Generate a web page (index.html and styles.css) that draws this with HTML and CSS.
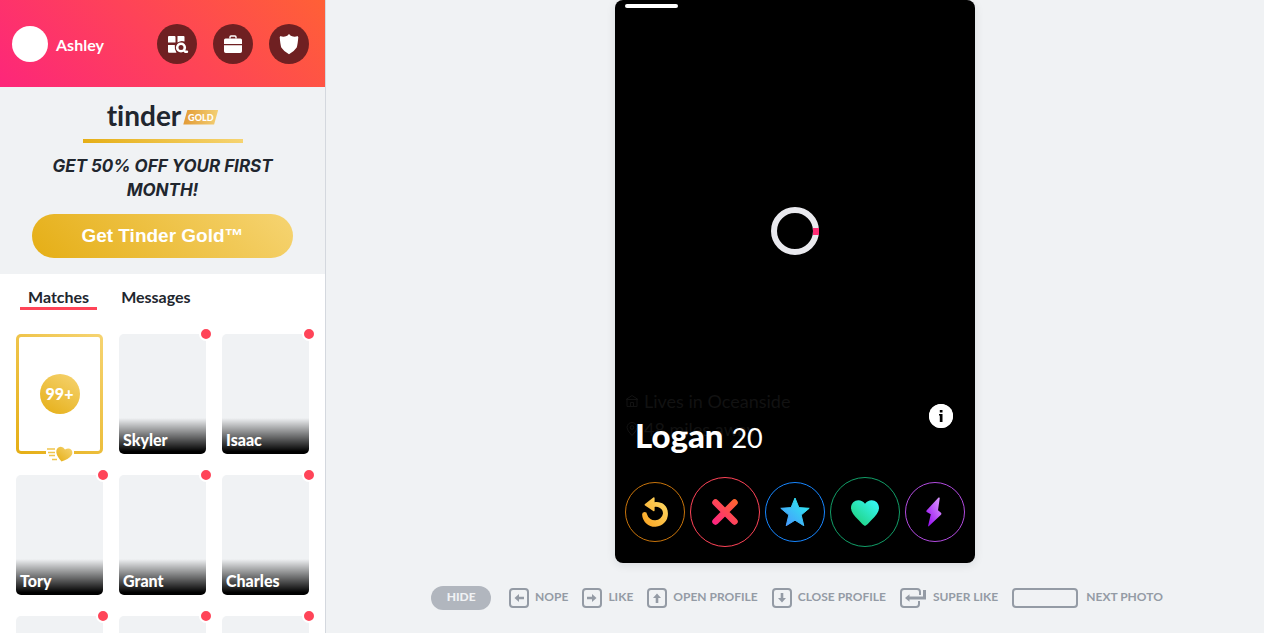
FILE: index.html
```html
<!DOCTYPE html>
<html lang="en">
<head>
<meta charset="utf-8">
<title>Tinder</title>
<link rel="stylesheet" href="styles.css">
</head>
<body>
<div class="app">
  <aside class="sidebar">
    <header class="topbar">
      <a class="profile" href="#"><span class="avatar"></span><span class="username">Ashley</span></a>
      <nav class="tools">
        <button class="tool" type="button" aria-label="Explore">
          <svg viewBox="0 0 40 40"><path fill="#fff" d="M12 12h5.500q1 0 1 1v5.500h-7.500v-5.500q0-1 1-1zM20.500 12h6q1 0 1 1v4.500q-3.500-1.500-7 1zM11 21h6.800q-.6 4 1.700 7.800h-7.500q-1 0-1-1z"/><circle cx="24" cy="23.500" r="3.800" fill="none" stroke="#fff" stroke-width="2.600"/><path d="M27 26.500l1.300 1.300h1.700" fill="none" stroke="#fff" stroke-width="2.400" stroke-linecap="round"/></svg>
        </button>
        <button class="tool" type="button" aria-label="Work mode">
          <svg viewBox="0 0 40 40"><path fill="#fff" d="M12.500 14.500h15q1.500 0 1.500 1.500v4h-18v-4q0-1.500 1.500-1.500zM11 21.200h18v6q0 1.800-1.800 1.800h-14.400q-1.800 0-1.800-1.800z"/><path d="M17 14.500v-1.500q0-1 1-1h4q1 0 1 1v1.500" fill="none" stroke="#fff" stroke-width="1.400"/></svg>
        </button>
        <button class="tool" type="button" aria-label="Safety">
          <svg viewBox="0 0 40 40"><path fill="#fff" d="M20 10q1.500 2 4 2.500 2.500.5 4.700-.5 0 .8.600 1-.5 7-1.600 10.500-2.500 4-7.700 6.700-5.200-2.700-7.700-6.700-1.100-3.500-1.600-10.500.6-.2.600-1 2.200 1 4.700.5 2.500-.5 4-2.500z"/></svg>
        </button>
      </nav>
    </header>

    <section class="promo">
      <div class="logo"><span class="logo-word">tinder</span><span class="logo-gold">GOLD</span></div>
      <div class="rule"></div>
      <p class="offer">GET 50% OFF YOUR FIRST MONTH!</p>
      <button class="gold-button" type="button">Get Tinder Gold™</button>
    </section>

    <nav class="tabs">
      <a class="tab tab-active" href="#">Matches</a>
      <a class="tab" href="#">Messages</a>
    </nav>

    <div class="matches">
      <a class="likes" href="#">
        <span class="count">99+</span>
        <svg class="flying-heart" viewBox="0 0 28 16">
          <defs><linearGradient id="gold" x1="0" y1="1" x2="1" y2="0"><stop stop-color="#e5ae15"/><stop offset="1" stop-color="#f6d472"/></linearGradient></defs>
          <path fill="#fff" d="M0 5h28v6H0z"/>
          <path d="M1 3h8M2 6.500h7M3 9.500h6M6 13.500h5" stroke="#efc54e" stroke-width="1.400"/>
          <path fill="url(#gold)" d="M15.500 15.500Q11 10.500 10.300 6.500Q10 2 13.500 1Q17 .2 19 3.500Q23 1.500 25.500 4Q27.500 7 25 10Q22.500 13 15.500 15.500z"/>
        </svg>
      </a>
      <a class="match" href="#"><span class="match-name">Skyler</span></a>
      <a class="match" href="#"><span class="match-name">Isaac</span></a>
      <a class="match" href="#"><span class="match-name">Tory</span></a>
      <a class="match" href="#"><span class="match-name">Grant</span></a>
      <a class="match" href="#"><span class="match-name">Charles</span></a>
      <a class="match" href="#" aria-label="Match"></a>
      <a class="match" href="#" aria-label="Match"></a>
      <a class="match" href="#" aria-label="Match"></a>
    </div>
  </aside>

  <main class="stage">
    <article class="card">
      <div class="photo-bar"></div>
      <div class="photo">
        <svg class="spinner" viewBox="0 0 48 48"><circle cx="24" cy="24" r="21" fill="none" stroke="#e9e9ee" stroke-width="6"/><path fill="#ff2d75" d="M42 21h6v7h-6z"/></svg>
      </div>
      <div class="info">
        <div class="details">
          <p class="detail"><svg class="detail-icon" viewBox="0 0 14 14" fill="none" stroke="currentColor"><path d="M1 5.500L7 1.500l6 4zM2 5.500v7h10v-7M5.500 12.500V8.500h3v4"/></svg>Lives in Oceanside</p>
          <p class="detail"><svg class="detail-icon" viewBox="0 0 14 14" fill="none" stroke="currentColor"><path d="M7 13.500Q2 8.500 2 5.500a5 5 0 0 1 10 0Q12 8.500 7 13.500z"/><circle cx="7" cy="5.500" r="1.800"/></svg>48 miles away</p>
        </div>
        <h1 class="person">Logan <span class="age">20</span></h1>
        <button class="info-button" type="button" aria-label="Open profile">
          <svg viewBox="0 0 24 24"><circle cx="12" cy="12" r="12" fill="#fff"/><path d="M10.800 6h2.700v2.400h-2.700zM10 10h3.500v8h-2.700v-6.500H10z"/></svg>
        </button>
      </div>
      <div class="actions">
        <button class="action action-rewind" type="button" aria-label="Rewind">
          <svg viewBox="0 0 30 30"><defs><linearGradient id="rewind" x1="0" y1="1" x2="1" y2="0"><stop stop-color="#f9a01e"/><stop offset="1" stop-color="#ffdf6b"/></linearGradient></defs><path fill="url(#rewind)" d="M13.300.4Q14.600-.1 14.600 1.200V5.200C23 4 27.900 10 27.900 16.300A12.900 12.900 0 0 1 2.100 17.500Q2.100 15 4.500 15Q7 15 7 17.300A8.200 8.200 0 0 0 23 16.500C23 12.500 19.500 9.200 14.600 9.900V13.200Q14.600 14.600 13.200 13.900L5 8.400Q4 7.700 5 6.900z"/></svg>
        </button>
        <button class="action action-big action-nope" type="button" aria-label="Nope">
          <svg viewBox="0 0 30 30"><defs><linearGradient id="nope" gradientUnits="userSpaceOnUse" x1="2" y1="28" x2="28" y2="2"><stop stop-color="#ff1f88"/><stop offset="1" stop-color="#ff6a28"/></linearGradient></defs><path d="M5.500 5.500l19 19M24.500 5.500l-19 19" stroke="url(#nope)" stroke-width="6.500" stroke-linecap="round"/></svg>
        </button>
        <button class="action action-super" type="button" aria-label="Super Like">
          <svg viewBox="0 0 30 30"><defs><linearGradient id="super" x1="0" y1="1" x2="1" y2="0"><stop stop-color="#4a90ff"/><stop offset="1" stop-color="#2cf5ee"/></linearGradient></defs><path fill="url(#super)" stroke="url(#super)" stroke-linejoin="round" d="M15 1l3.900 9.600 10.300.7-8 6.700 2.600 10.700-8.800-5.500-8.800 5.500L8.800 18l-8-6.700 10.300-.7z"/></svg>
        </button>
        <button class="action action-big action-like" type="button" aria-label="Like">
          <svg viewBox="0 0 30 30"><defs><linearGradient id="like" x1="0" y1="1" x2="1" y2="0"><stop offset=".1" stop-color="#1fd07b"/><stop offset="1" stop-color="#37fbff"/></linearGradient></defs><path fill="url(#like)" d="M15 29Q13 28 9 23.500Q1 16 1 11C1 6 4.500 3.200 8.300 3.200Q12.500 3.200 15 6.700Q17.500 3.200 21.700 3.200C25.500 3.200 29 6 29 11Q29 16 21 23.500Q17 28 15 29z"/></svg>
        </button>
        <button class="action action-boost" type="button" aria-label="Boost">
          <svg viewBox="0 0 30 30"><defs><linearGradient id="boost" x1="0" y1="1" x2="1" y2="0"><stop stop-color="#9100f0"/><stop offset="1" stop-color="#e0a4ff"/></linearGradient></defs><path fill="url(#boost)" d="M18.500.6Q20 0 19.700 1.500L18 13.300 21 15.800Q21.800 16.700 21 17.800L9 29Q7.800 30 8.200 28.400L10.800 17.200 6.700 15Q6 14.200 6.700 13.300z"/></svg>
        </button>
      </div>
    </article>

    <footer class="hints">
      <button class="hide" type="button">HIDE</button>
      <ul class="hint-list">
        <li class="hint"><svg class="key" viewBox="0 0 20 20"><rect x="1" y="1" width="18" height="18" rx="3"/><path class="arrow" d="M5.500 10l4.500-4v2.700h5v2.600h-5v2.700z"/></svg>NOPE</li>
        <li class="hint"><svg class="key" viewBox="0 0 20 20"><rect x="1" y="1" width="18" height="18" rx="3"/><path class="arrow" d="M14.500 10l-4.500 4v-2.700h-5v-2.600h5v-2.700z"/></svg>LIKE</li>
        <li class="hint"><svg class="key" viewBox="0 0 20 20"><rect x="1" y="1" width="18" height="18" rx="3"/><path class="arrow" d="M10 5.500l4 4.500h-2.700v5h-2.600v-5h-2.700z"/></svg>OPEN PROFILE</li>
        <li class="hint"><svg class="key" viewBox="0 0 20 20"><rect x="1" y="1" width="18" height="18" rx="3"/><path class="arrow" d="M10 14.500l-4-4.500h2.700v-5h2.600v5h2.700z"/></svg>CLOSE PROFILE</li>
        <li class="hint"><svg class="key key-enter" viewBox="0 0 27 20"><path d="M20 7V4q0-3-3-3H4Q1 1 1 4v12q0 3 3 3h12q3 0 3-3v-3"/><path class="thick" d="M9 10h15.500V2"/><path class="arrow" d="M5 10l4.500-3.800v7.600z"/></svg>SUPER LIKE</li>
        <li class="hint hint-space"><svg class="key key-space" viewBox="0 0 66 20"><rect x="1" y="1" width="64" height="18" rx="3"/></svg>NEXT PHOTO</li>
      </ul>
    </footer>
  </main>
</div>
</body>
</html>
```
FILE: styles.css
```css
*,
*::after {
  box-sizing: border-box;
}

body {
  margin: 0;
  font-family: Lato, "Open Sans", sans-serif;
  color: #21262e;
}

button {
  padding: 0;
  border: 0;
  font-family: inherit;
  cursor: pointer;
}

a {
  color: inherit;
  text-decoration: none;
}

p,
h1,
ul {
  margin: 0;
  padding: 0;
}

.app {
  display: flex;
  height: 100vh;
  overflow: hidden;
  background: #f0f2f4;
}

.sidebar {
  flex: 0 0 326px;
  overflow: hidden;
  background: #fff;
  border-right: 1px solid #d4d8de;
}

.topbar {
  display: flex;
  align-items: center;
  justify-content: space-between;
  height: 87px;
  padding: 0 16px 0 12px;
  background: linear-gradient(45deg, #fd267a, #ff6036);
}

.profile {
  display: flex;
  align-items: center;
  gap: 8px;
  color: #fff;
  font-size: 16px;
  font-weight: 700;
}

.username {
  padding-top: 2px;
}

.avatar {
  width: 36px;
  height: 36px;
  border-radius: 50%;
  background: #fff;
}

.tools {
  display: flex;
  gap: 16px;
}

.tool {
  width: 40px;
  height: 40px;
  border-radius: 50%;
  background: #6f2022;
}

.tool svg,
.info-button svg {
  display: block;
}

.promo {
  display: flex;
  flex-direction: column;
  align-items: center;
  padding: 12px 32px 16px;
  background: #f0f2f4;
}

.logo {
  display: flex;
  align-items: center;
  gap: 2px;
  height: 40px;
  padding-bottom: 4px;
}

.logo-word {
  padding-bottom: 4px;
  font-size: 28px;
  font-variant-ligatures: none;
  font-weight: 700;
  line-height: 32px;
}

.logo-gold {
  width: 35px;
  background: linear-gradient(90deg, #e29a35, #f3cf73);
  clip-path: polygon(12% 0, 100% 0, 88% 100%, 0 100%);
  color: #fff;
  font-size: 9px;
  font-weight: 900;
  line-height: 15px;
  text-align: center;
}

.rule {
  width: 160px;
  height: 4px;
  background: linear-gradient(45deg, #e5ae15, #f6d472);
}

.offer {
  padding: 11px 0 12px;
  font-family: Inter, sans-serif;
  font-size: 17px;
  font-style: italic;
  font-weight: 700;
  line-height: 24px;
  text-align: center;
}

.gold-button {
  width: 100%;
  height: 44px;
  border-radius: 22px;
  background: linear-gradient(45deg, #e5ae15, #f6d472);
  color: #fff;
  font-family: "Liberation Sans", Arial, sans-serif;
  font-size: 19px;
  font-weight: 700;
}

.tabs {
  display: flex;
  gap: 16px;
  padding: 12px 20px 24px;
}

.tab {
  padding: 0 8px;
  border-bottom: 3px solid transparent;
  font-size: 16px;
  font-weight: 700;
  line-height: 21px;
}

.tab-active {
  border-color: #ff4458;
}

.matches {
  display: grid;
  grid-template-columns: repeat(3, 1fr);
  grid-auto-rows: 120px;
  gap: 21px 16px;
  padding: 0 16px;
}

.likes {
  position: relative;
  display: grid;
  place-items: center;
  border: 3px solid transparent;
  border-radius: 5px;
  background: linear-gradient(#fff, #fff) padding-box, linear-gradient(45deg, #e5ae15, #f6d472) border-box;
}

.count {
  width: 40px;
  border-radius: 50%;
  background: linear-gradient(30deg, #e5ae15, #f6d472);
  color: #fff;
  font-size: 16px;
  font-weight: 900;
  line-height: 40px;
  text-align: center;
}

.flying-heart {
  position: absolute;
  left: 27px;
  bottom: -11px;
  width: 28px;
  height: 16px;
}

.match {
  position: relative;
  display: flex;
  align-items: flex-end;
  border-radius: 5px;
  background: linear-gradient(transparent 70%, #000 98%), #f0f2f4;
  color: #fff;
  font-size: 16px;
  font-weight: 900;
}

.match::after {
  content: "";
  position: absolute;
  top: -7px;
  right: -7px;
  width: 14px;
  height: 14px;
  border: 2px solid #fff;
  border-radius: 50%;
  background: #ff4458;
}

.match-name {
  padding: 0 4px 4px;
  line-height: 20px;
}

.stage {
  flex: 1;
  display: flex;
  flex-direction: column;
  align-items: center;
  min-width: 0;
}

.card {
  flex: 1;
  display: flex;
  flex-direction: column;
  width: 100%;
  max-width: 360px;
  padding: 4px 10px 16px;
  border-radius: 8px;
  background: #000;
  box-shadow: 0 2px 10px rgba(22, 28, 38, 0.1);
}

.photo-bar {
  width: 53px;
  height: 4px;
  border-radius: 2px;
  background: #fff;
}

.photo {
  flex: 1;
  display: grid;
  place-items: center;
  padding-top: 67px;
}

.spinner {
  width: 48px;
  height: 48px;
}

.info {
  display: grid;
  grid-template-columns: 1fr 24px;
  min-height: 90px;
  padding: 0 12px 20px 0;
}

.details,
.person {
  grid-area: 1 / 1;
}

.details {
  color: #121212;
  font-size: 18px;
  line-height: 28px;
}

.detail {
  display: flex;
  align-items: center;
  gap: 5px;
}

.detail-icon {
  width: 14px;
  height: 14px;
}

.person {
  align-self: end;
  padding-left: 10px;
  color: #fff;
  font-size: 33px;
  font-weight: 900;
  line-height: 38px;
}

.age {
  font-size: 27px;
  font-weight: 400;
}

.info-button {
  grid-area: 1 / 2;
  width: 24px;
  height: 24px;
  margin-top: 17px;
  border-radius: 50%;
  background: #fff;
}

.actions {
  display: flex;
  align-items: center;
  gap: 5px;
}

.action {
  display: grid;
  place-items: center;
  width: 60px;
  height: 60px;
  border: 1px solid;
  border-radius: 50%;
  background: #000;
}

.action svg {
  width: 30px;
  height: 30px;
}

.action-big {
  width: 70px;
  height: 70px;
}

.action-rewind {
  border-color: #c8740b;
}

.action-nope {
  border-color: #ff4458;
}

.action-super {
  border-color: #1786ff;
}

.action-like {
  border-color: #129e68;
}

.action-boost {
  border-color: #b24be0;
}

.hints {
  display: flex;
  align-items: center;
  gap: 18px;
  height: 70px;
  padding-left: 4px;
}

.hide {
  width: 60px;
  height: 24px;
  border-radius: 12px;
  background: #b1b6be;
  color: #f0f2f4;
  font-size: 12px;
  font-weight: 900;
  line-height: 22px;
  padding-bottom: 2px;
}

.hint-list {
  display: flex;
  gap: 14px;
  list-style: none;
}

.hint {
  display: flex;
  align-items: flex-start;
  gap: 6px;
  color: #949ba5;
  font-size: 12px;
  font-weight: 700;
  line-height: 18px;
  white-space: nowrap;
}

.hint-space {
  gap: 8px;
}

.key {
  width: 20px;
  height: 20px;
  fill: none;
  stroke: #949ba5;
  stroke-width: 2;
}

.key .arrow {
  fill: #949ba5;
  stroke: none;
}

.key .thick {
  stroke-width: 3;
}

.key-enter {
  width: 27px;
}

.key-space {
  width: 66px;
}
```
